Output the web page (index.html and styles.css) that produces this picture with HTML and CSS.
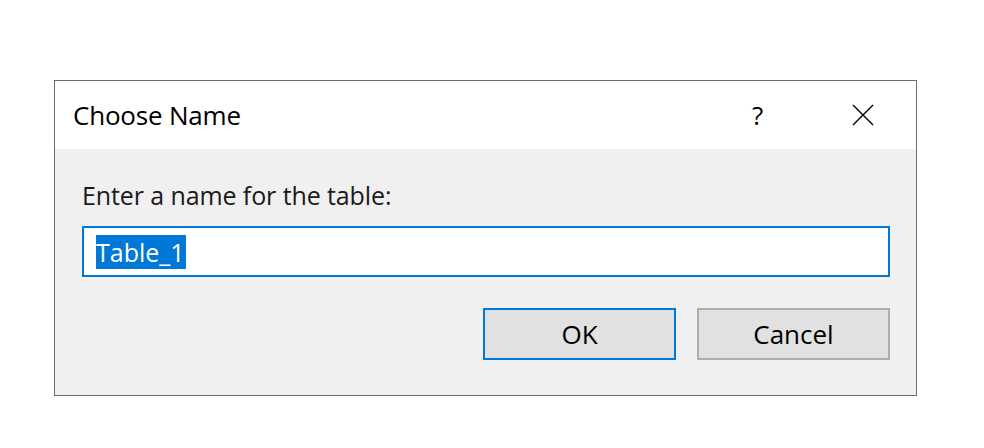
FILE: index.html
```html
<!DOCTYPE html>
<html>
<head>
<meta charset="utf-8">
<link rel="stylesheet" href="styles.css">
</head>
<body>
<div class="dialog">
  <div class="titlebar">
    <div class="title">Choose Name</div>
    <div class="tb-buttons">
      <span class="help">?</span>
      <svg class="close" width="22" height="22" viewBox="0 0 22 22"><path d="M1 1 L21 21 M21 1 L1 21" stroke="#000" stroke-width="1.4" fill="none"/></svg>
    </div>
  </div>
  <div class="body">
    <div class="label">Enter a name for the table:</div>
    <div class="input"><span class="sel">Table_1</span></div>
    <div class="actions">
      <div class="btn btn-default">OK</div>
      <div class="btn">Cancel</div>
    </div>
  </div>
</div>
</body>
</html>
```
FILE: styles.css
```css
html, body {
  margin: 0;
  padding: 0;
  background: #ffffff;
}
body {
  font-family: "Open Sans", "Noto Sans", sans-serif;
  color: #000;
}
.dialog {
  margin: 80px 0 0 54px;
  width: 861px;
  height: 314px;
  border: 1px solid #6e6e6e;
  background: #f0f0f0;
  display: flex;
  flex-direction: column;
}
.titlebar {
  height: 68px;
  background: #fff;
  display: flex;
  align-items: center;
  justify-content: space-between;
  padding-left: 18px;
}
.title {
  font-size: 26px;
  letter-spacing: -0.2px;
}
.tb-buttons {
  display: flex;
  align-items: center;
  height: 100%;
}
.help {
  font-size: 26px;
  width: 105px;
  text-align: center;
}
.close {
  margin: 0 42px 0 42px;
}
.body {
  flex: 1;
  padding: 30px 26px 0 27px;
  display: flex;
  flex-direction: column;
}
.label {
  font-size: 25px;
  line-height: 32px;
  color: #1a1a1a;
  letter-spacing: -0.1px;
}
.input {
  margin-top: 15px;
  height: 47px;
  border: 2px solid #0078d7;
  background: #fff;
  display: flex;
  align-items: center;
  padding-left: 12px;
}
.sel {
  background: #0078d7;
  color: #fff;
  font-size: 25px;
  line-height: 34px;
  padding-right: 1px;
}
.actions {
  margin-top: 31px;
  display: flex;
  justify-content: flex-end;
  gap: 21px;
}
.btn {
  width: 189px;
  height: 48px;
  border: 2px solid #adadad;
  background: #e1e1e1;
  font-size: 26px;
  display: flex;
  align-items: center;
  justify-content: center;
}
.btn-default {
  border-color: #0078d7;
}
```
